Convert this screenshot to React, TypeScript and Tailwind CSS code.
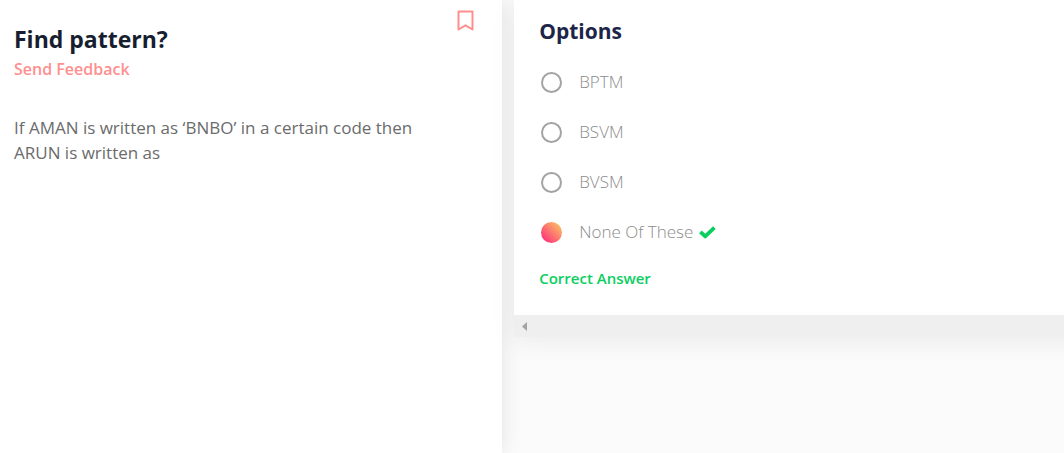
import { useState } from "react";

const options = ["BPTM", "BSVM", "BVSM", "None Of These"];
const correct = "None Of These";

function Bookmark() {
  return (
    <svg width="17" height="21" viewBox="0 0 17 21" fill="none" stroke="#ff8f8f" strokeWidth="2" strokeLinejoin="round" aria-hidden="true">
      <path d="M1.5 1.5h14v18l-7-4.2-7 4.2z" />
    </svg>
  );
}

function Check() {
  return (
    <svg width="17" height="13" viewBox="0 0 17 13" fill="none" stroke="#0acf5f" strokeWidth="3.8" strokeLinejoin="round" aria-hidden="true">
      <path d="M1.4 5.8l4.8 4.6L15.4 1.6" />
    </svg>
  );
}

export default function App() {
  const [selected, setSelected] = useState(correct);

  return (
    <main className="flex min-h-screen items-start gap-3 overflow-hidden bg-[#fbfbfb] font-['Open_Sans','Noto_Sans',sans-serif]">
      <section className="flex min-h-screen w-[47.2%] shrink-0 items-start justify-between bg-white pt-2 pr-7 pl-3.5 shadow-[0_0_20px_rgba(0,0,0,0.1)]">
        <div className="pt-4">
          <h1 className="text-[23px] leading-[30px] font-bold text-[#161e2f]">Find pattern?</h1>
          <a href="#feedback" className="block text-base leading-[30px] font-semibold text-[#ff8f8f]">
            Send Feedback
          </a>
          <p className="mt-[31px] max-w-[420px] text-[17px] leading-[25px] text-[#6b6b6b]">
            If AMAN is written as ‘BNBO’ in a certain code then ARUN is written as
          </p>
        </div>
        <button type="button" aria-label="Bookmark question" className="pt-0.5">
          <Bookmark />
        </button>
      </section>

      <section className="-mr-10 min-w-0 flex-1 shadow-[0_4px_24px_rgba(0,0,0,0.07)]">
        <div className="bg-white px-[25px] pt-4 pb-[23px]">
          <fieldset>
            <legend className="text-[21px] leading-[30px] font-bold text-[#1c2548]">Options</legend>
            <div className="pt-[11px]">
              {options.map((option) => (
                <label key={option} className="flex h-[50px] items-center text-[17px] font-light text-[#8c8c8c]">
                  <input
                    type="radio"
                    name="answer"
                    value={option}
                    checked={selected === option}
                    onChange={() => setSelected(option)}
                    className="mr-[17px] ml-0.5 size-[21px] shrink-0 appearance-none rounded-full border-2 border-[#a3a3a3] checked:border-0 checked:bg-linear-45/srgb checked:from-[#ff1f7d] checked:to-[#f9d062]"
                  />
                  <span className="mr-1.5">{option}</span>
                  {option === correct && <Check />}
                </label>
              ))}
            </div>
          </fieldset>
          <p className="mt-[7px] text-[15px] leading-7 font-semibold text-[#0acf5f]">Correct Answer</p>
        </div>
        <div className="flex h-[22px] items-center bg-[#efefef] px-2">
          <button type="button" aria-label="Scroll left">
            <svg width="5" height="9" viewBox="0 0 5 9" fill="#a3a3a3" aria-hidden="true">
              <path d="M5 0v9L0 4.5z" />
            </svg>
          </button>
        </div>
      </section>
    </main>
  );
}
